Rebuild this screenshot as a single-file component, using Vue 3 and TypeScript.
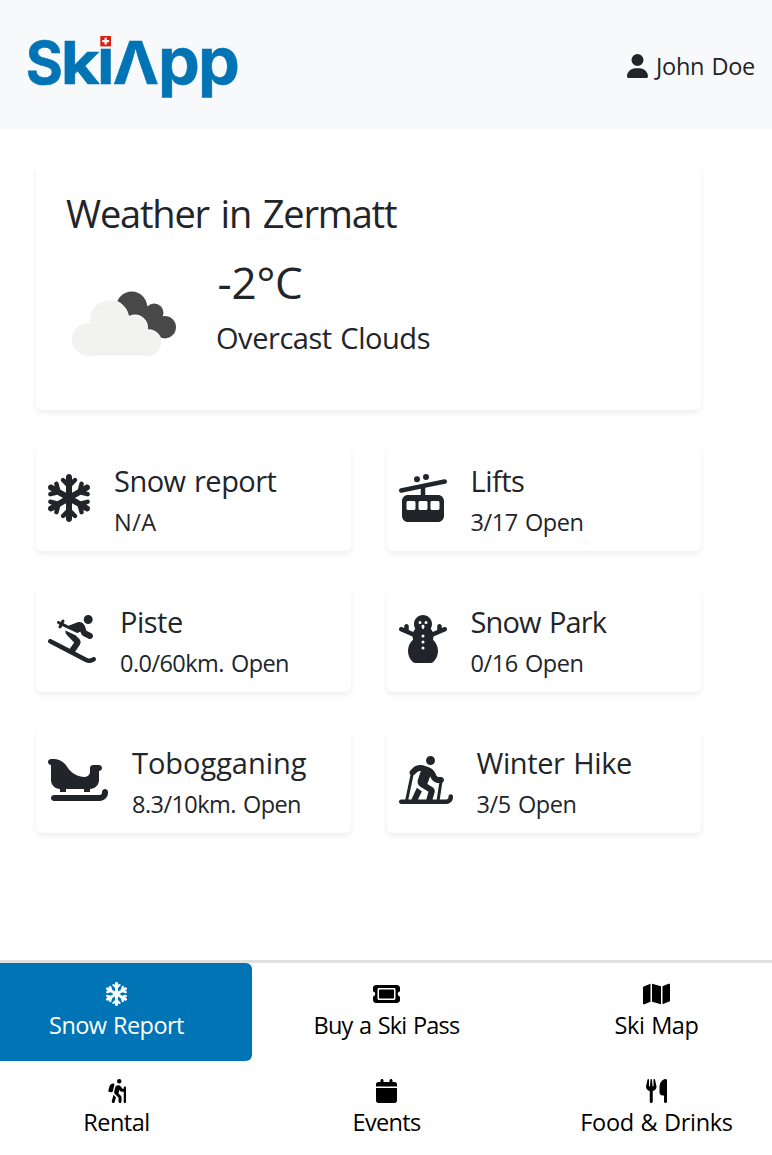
<script setup lang="ts">
interface Icon {
  width: number
  path: string
}

interface Tile {
  title: string
  status: string
  icon: Icon
  titleTracking: number
  statusTracking: number
}

interface NavItem {
  label: string
  icon: Icon
  tracking: number
  active?: boolean
}

const snowflake: Icon = {
  width: 448,
  path: 'M224 0c17.7 0 32 14.3 32 32V62.1l15-15c9.4-9.4 24.6-9.4 33.9 0s9.4 24.6 0 33.9l-49 49v70.3l61.4-35.8 17.7-66.1c3.4-12.8 16.6-20.4 29.4-17s20.4 16.6 17 29.4l-5.2 19.3 23.6-13.8c15.3-8.9 34.9-3.7 43.8 11.5s3.8 34.9-11.5 43.8l-25.3 14.8 21.7 5.8c12.8 3.4 20.4 16.6 17 29.4s-16.6 20.4-29.4 17l-67.7-18.1L287.5 256l60.9 35.5 67.7-18.1c12.8-3.4 26 4.2 29.4 17s-4.2 26-17 29.4l-21.7 5.8 25.3 14.8c15.3 8.9 20.4 28.5 11.5 43.8s-28.5 20.4-43.8 11.5l-23.6-13.8 5.2 19.3c3.4 12.8-4.2 26-17 29.4s-26-4.2-29.4-17l-17.7-66.1L256 311.7v70.3l49 49c9.4 9.4 9.4 24.6 0 33.9s-24.6 9.4-33.9 0l-15-15V480c0 17.7-14.3 32-32 32s-32-14.3-32-32V449.9l-15 15c-9.4 9.4-24.6 9.4-33.9 0s-9.4-24.6 0-33.9l49-49V311.7l-61.4 35.8-17.7 66.1c-3.4 12.8-16.6 20.4-29.4 17s-20.4-16.6-17-29.4l5.2-19.3L48.1 395.6c-15.3 8.9-34.9 3.7-43.8-11.5s-3.7-34.9 11.5-43.8l25.3-14.8-21.7-5.8c-12.8-3.4-20.4-16.6-17-29.4s16.6-20.4 29.4-17l67.7 18.1L160.5 256 99.6 220.5 31.9 238.6c-12.8 3.4-26-4.2-29.4-17s4.2-26 17-29.4l21.7-5.8L15.9 171.6C.6 162.7-4.5 143.1 4.4 127.9s28.5-20.4 43.8-11.5l23.6 13.8-5.2-19.3c-3.4-12.8 4.2-26 17-29.4s26 4.2 29.4 17l17.7 66.1L192 200.3V129.9L143 81c-9.4-9.4-9.4-24.6 0-33.9s24.6-9.4 33.9 0l15 15V32c0-17.7 14.3-32 32-32z',
}

const cableCar: Icon = {
  width: 512,
  path: 'M288 0a32 32 0 1 1 0 64 32 32 0 1 1 0-64zM160 56a32 32 0 1 1 64 0 32 32 0 1 1 -64 0zM32 288c0-35.3 28.7-64 64-64H232V157.5l-203.1 42c-13 2.7-25.7-5.7-28.4-18.6s5.7-25.7 18.6-28.4l232-48 232-48c13-2.7 25.7 5.7 28.4 18.6s-5.7 25.7-18.6 28.4L280 147.5V224H416c35.3 0 64 28.7 64 64V448c0 35.3-28.7 64-64 64H96c-35.3 0-64-28.7-64-64V288zm64 0c-8.8 0-16 7.2-16 16v64c0 8.8 7.2 16 16 16h64c8.8 0 16-7.2 16-16V304c0-8.8-7.2-16-16-16H96zm112 16v64c0 8.8 7.2 16 16 16h64c8.8 0 16-7.2 16-16V304c0-8.8-7.2-16-16-16H224c-8.8 0-16 7.2-16 16zm144-16c-8.8 0-16 7.2-16 16v64c0 8.8 7.2 16 16 16h64c8.8 0 16-7.2 16-16V304c0-8.8-7.2-16-16-16H352z',
}

const skier: Icon = {
  width: 512,
  path: 'M380.7 48a48 48 0 1 1 96 0 48 48 0 1 1 -96 0zM2.7 268.9c6.1-11.8 20.6-16.3 32.4-10.2L232.7 361.3l46.2-69.2-75.1-75.1c-14.6-14.6-20.4-33.9-18.4-52.1l108.8 52 39.3 39.3c16.2 16.2 18.7 41.5 6 60.6L289.8 391l128.7 66.8c13.6 7.1 29.8 7.2 43.6 .3l15.2-7.6c11.9-5.9 26.3-1.1 32.2 10.7s1.1 26.3-10.7 32.2l-15.2 7.6c-27.5 13.7-59.9 13.5-87.2-.7L12.9 301.3C1.2 295.2-3.4 280.7 2.7 268.9zM118.9 65.6L137 74.2l8.7-17.4c4-7.9 13.6-11.1 21.5-7.2s11.1 13.6 7.2 21.5l-8.5 16.9 54.7 26.2c1.5-.7 3.1-1.4 4.7-2.1l83.4-33.4c34.2-13.7 72.8 4.2 84.5 39.2l17.1 51.2 52.1 26.1c15.8 7.9 22.2 27.1 14.3 42.9s-27.1 22.2-42.9 14.3l-58.1-29c-11.4-5.7-20-15.7-24.1-27.8l-5.8-17.3-27.3 12.1-6.8 3-6.7-3.2L151.5 116.7l-9.2 18.4c-4 7.9-13.6 11.1-21.5 7.2s-11.1-13.6-7.2-21.5l9-18-17.6-8.4c-8-3.8-11.3-13.4-7.5-21.3s13.4-11.3 21.3-7.5z',
}

const snowman: Icon = {
  width: 512,
  path: 'M341.1 140.6c-2 3.9-1.6 8.6 1.2 12c7 8.5 12.9 18.1 17.2 28.4L408 160.2V120c0-13.3 10.7-24 24-24s24 10.7 24 24v19.6l22.5-9.7c12.2-5.2 26.3 .4 31.5 12.6s-.4 26.3-12.6 31.5l-56 24-73.6 31.5c-.5 9.5-2.1 18.6-4.8 27.3c-1.2 3.8-.1 8 2.8 10.8C396.7 296.9 416 338.2 416 384c0 44.7-18.3 85-47.8 114.1c-9.9 9.7-23.7 13.9-37.5 13.9H181.3c-13.9 0-27.7-4.2-37.5-13.9C114.3 469 96 428.7 96 384c0-45.8 19.3-87.1 50.1-116.3c2.9-2.8 4-6.9 2.8-10.8c-2.7-8.7-4.3-17.9-4.8-27.3L70.5 198.1l-56-24C2.4 168.8-3.3 154.7 1.9 142.5s19.3-17.8 31.5-12.6L56 139.6V120c0-13.3 10.7-24 24-24s24 10.7 24 24v40.2L152.6 181c4.3-10.3 10.1-19.9 17.2-28.4c2.8-3.4 3.3-8.1 1.2-12C164 127.2 160 112.1 160 96c0-53 43-96 96-96s96 43 96 96c0 16.1-4 31.2-10.9 44.6zM224 96a16 16 0 1 0 0-32 16 16 0 1 0 0 32zm48 128a16 16 0 1 0 -32 0 16 16 0 1 0 32 0zm-16 80a16 16 0 1 0 0-32 16 16 0 1 0 0 32zm16 48a16 16 0 1 0 -32 0 16 16 0 1 0 32 0zM288 96a16 16 0 1 0 0-32 16 16 0 1 0 0 32zm-48 24v3.2c0 3.2 .8 6.3 2.3 9l9 16.9c.9 1.7 2.7 2.8 4.7 2.8s3.8-1.1 4.7-2.8l9-16.9c1.5-2.8 2.3-5.9 2.3-9V120c0-8.8-7.2-16-16-16s-16 7.2-16 16z',
}

const sleigh: Icon = {
  width: 640,
  path: 'M32 32C14.3 32 0 46.3 0 64S14.3 96 32 96V256c0 53 43 96 96 96v32h64V352H384v32h64V352c53 0 96-43 96-96V160c17.7 0 32-14.3 32-32s-14.3-32-32-32H480c-17.7 0-32 14.3-32 32v41.3c0 30.2-24.5 54.7-54.7 54.7c-75.5 0-145.6-38.9-185.6-102.9l-4.3-6.9C174.2 67.6 125 37.6 70.7 32.7c-2.2-.5-4.4-.7-6.7-.7H55 32zM640 384c0-17.7-14.3-32-32-32s-32 14.3-32 32v8c0 13.3-10.7 24-24 24H64c-17.7 0-32 14.3-32 32s14.3 32 32 32H552c48.6 0 88-39.4 88-88v-8z',
}

const nordicSkier: Icon = {
  width: 576,
  path: 'M336 96a48 48 0 1 0 0-96 48 48 0 1 0 0 96zM227.2 160c1.9 0 3.8 .1 5.6 .3L201.6 254c-9.3 28 1.7 58.8 26.8 74.5l86.2 53.9L291.3 464H202.8l41.1-88.1-32.4-20.3c-7.8-4.9-14.7-10.7-20.6-17.3L132.2 464H99.7l54.2-257.6c4.6-1.5 9-4.1 12.7-7.8l23.1-23.1c9.9-9.9 23.4-15.5 37.5-15.5zM121.4 198.6c.4 .4 .8 .8 1.3 1.2L67 464H24c-13.3 0-24 10.7-24 24s10.7 24 24 24H504c39.8 0 72-32.2 72-72v-8c0-13.3-10.7-24-24-24s-24 10.7-24 24v8c0 13.3-10.7 24-24 24H434.4l27.6-179.3c10.5-5.2 17.8-16.1 17.8-28.7c0-17.7-14.3-32-32-32H426.7c-12.9 0-24.6-7.8-29.5-19.7l-6.3-15c-14.6-35.1-44.1-61.9-80.5-73.1l-48.7-15c-11.1-3.4-22.7-5.2-34.4-5.2c-31 0-60.8 12.3-82.7 34.3l-23.1 23.1c-12.5 12.5-12.5 32.8 0 45.3zm308 89.4L402.3 464H357.8l21.6-75.6c5.9-20.6-2.6-42.6-20.7-53.9L302 299l30.9-82.4 5.1 12.3C353 264.7 387.9 288 426.7 288h2.7z',
}

const ticket: Icon = {
  width: 576,
  path: 'M64 64C28.7 64 0 92.7 0 128v64c0 8.8 7.4 15.7 15.7 18.6C34.5 217.1 48 235 48 256s-13.5 38.9-32.3 45.4C7.4 304.3 0 311.2 0 320v64c0 35.3 28.7 64 64 64H512c35.3 0 64-28.7 64-64V320c0-8.8-7.4-15.7-15.7-18.6C541.5 294.9 528 277 528 256s13.5-38.9 32.3-45.4c8.3-2.9 15.7-9.8 15.7-18.6V128c0-35.3-28.7-64-64-64H64zm64 112l0 160c0 8.8 7.2 16 16 16H432c8.8 0 16-7.2 16-16V176c0-8.8-7.2-16-16-16H144c-8.8 0-16 7.2-16 16zM96 160c0-17.7 14.3-32 32-32H448c17.7 0 32 14.3 32 32V352c0 17.7-14.3 32-32 32H128c-17.7 0-32-14.3-32-32V160z',
}

const map: Icon = {
  width: 576,
  path: 'M384 476.1L192 421.2V35.9L384 90.8V476.1zm32-1.2V88.4L543.1 37.5c15.8-6.3 32.9 5.3 32.9 22.3V394.6c0 9.8-6 18.6-15.1 22.3L416 474.8zM15.1 95.1L160 37.2V423.6L32.9 474.5C17.1 480.8 0 469.2 0 452.2V117.4c0-9.8 6-18.6 15.1-22.3z',
}

const hiker: Icon = {
  width: 384,
  path: 'M192 48a48 48 0 1 1 96 0 48 48 0 1 1 -96 0zm51.3 182.7L224.2 307l49.7 49.7c9 9 14.1 21.2 14.1 33.9V480c0 17.7-14.3 32-32 32s-32-14.3-32-32V397.3l-73.9-73.9c-15.8-15.8-22.2-38.6-16.9-60.3l20.4-84c8.3-34.1 42.7-54.9 76.7-46.4c19 4.8 35.6 16.4 46.4 32.7L305.1 208H336V184c0-13.3 10.7-24 24-24s24 10.7 24 24v55.8c0 .1 0 .2 0 .2s0 .2 0 .2V488c0 13.3-10.7 24-24 24s-24-10.7-24-24V272H296.6c-16 0-31-8-39.9-21.4l-13.3-20zM81.1 471.9L117.3 334c3 4.2 6.4 8.2 10.1 11.9l41.9 41.9L142.9 488.1c-4.5 17.1-22 27.3-39.1 22.8s-27.3-22-22.8-39.1zm55.5-346L101.4 266.5c-3 12.1-14.9 19.9-27.2 17.9l-47.9-8c-14-2.3-22.9-16.3-19.2-30L31.9 155c9.5-34.8 41.1-59 77.2-59h4.2c15.6 0 27.1 14.7 23.3 29.8z',
}

const calendar: Icon = {
  width: 448,
  path: 'M96 32V64H48C21.5 64 0 85.5 0 112v48H448V112c0-26.5-21.5-48-48-48H352V32c0-17.7-14.3-32-32-32s-32 14.3-32 32V64H160V32c0-17.7-14.3-32-32-32S96 14.3 96 32zM448 192H0V464c0 26.5 21.5 48 48 48H400c26.5 0 48-21.5 48-48V192z',
}

const utensils: Icon = {
  width: 448,
  path: 'M416 0C400 0 288 32 288 176V288c0 35.3 28.7 64 64 64h32V480c0 17.7 14.3 32 32 32s32-14.3 32-32V352 240 32c0-17.7-14.3-32-32-32zM64 16C64 7.8 57.9 1 49.7 .1S34.2 4.6 32.4 12.5L2.1 148.8C.7 155.1 0 161.5 0 167.9c0 45.9 35.1 83.6 80 87.7V480c0 17.7 14.3 32 32 32s32-14.3 32-32V255.6c44.9-4.1 80-41.8 80-87.7c0-6.4-.7-12.8-2.1-19.1L191.6 12.5c-1.8-8-9.3-13.3-17.4-12.4S160 7.8 160 16V150.2c0 5.4-4.4 9.8-9.8 9.8c-5.1 0-9.3-3.9-9.8-9L127.9 14.6C127.2 6.3 120.3 0 112 0s-15.2 6.3-15.9 14.6L83.7 151c-.5 5.1-4.7 9-9.8 9c-5.4 0-9.8-4.4-9.8-9.8V16z',
}

const tiles: Tile[] = [
  { title: 'Snow report', status: 'N/A', icon: snowflake, titleTracking: -0.52, statusTracking: 0.5 },
  { title: 'Lifts', status: '3/17 Open', icon: cableCar, titleTracking: -0.5, statusTracking: -0.42 },
  { title: 'Piste', status: '0.0/60km. Open', icon: skier, titleTracking: -0.5, statusTracking: -0.55 },
  { title: 'Snow Park', status: '0/16 Open', icon: snowman, titleTracking: -0.85, statusTracking: -0.42 },
  { title: 'Tobogganing', status: '8.3/10km. Open', icon: sleigh, titleTracking: -0.04, statusTracking: -0.55 },
  { title: 'Winter Hike', status: '3/5 Open', icon: nordicSkier, titleTracking: -0.38, statusTracking: -0.42 },
]

const navItems: NavItem[] = [
  { label: 'Snow Report', icon: snowflake, tracking: -0.56, active: true },
  { label: 'Buy a Ski Pass', icon: ticket, tracking: -0.75 },
  { label: 'Ski Map', icon: map, tracking: -0.4 },
  { label: 'Rental', icon: hiker, tracking: -0.51 },
  { label: 'Events', icon: calendar, tracking: -0.66 },
  { label: 'Food & Drinks', icon: utensils, tracking: -0.33 },
]
</script>

<template>
  <div class="app">
    <header class="header">
      <svg class="logo" width="214" height="66" viewBox="26 34 214 66" role="img" aria-label="SkiApp">
        <g class="wordmark">
          <text class="cap" transform="translate(25.7 83.5) scale(.96 1)">S</text>
          <text class="cap" transform="translate(60.7 83.5) scale(1.14 1)">k</text>
          <text class="low" transform="translate(97 83.7)">ı</text>
          <text class="cap" transform="translate(112.8 83.5) scale(1.05 1)">Λ</text>
          <text class="low" transform="translate(158 83.7) scale(1.03 1)">p</text>
          <text class="low" transform="translate(198 83.7) scale(1.03 1)">p</text>
        </g>
        <rect x="100.3" y="36" width="10.7" height="10.4" fill="#dc2010" />
        <path d="M105.65 37.8v6.8M102.25 41.2h6.8" stroke="#fff" stroke-width="2.2" />
      </svg>
      <div class="user">
        <svg width="21" height="24" viewBox="0 0 448 512" fill="currentColor">
          <path d="M224 256A128 128 0 1 0 224 0a128 128 0 1 0 0 256zm-45.7 48C79.8 304 0 383.8 0 482.3C0 498.7 13.3 512 29.7 512H418.3c16.4 0 29.7-13.3 29.7-29.7C448 383.8 368.2 304 269.7 304H178.3z" />
        </svg>
        <span class="user-name">John Doe</span>
      </div>
    </header>

    <main class="content">
      <section class="card weather">
        <h2 class="weather-title">Weather in Zermatt</h2>
        <div class="weather-body">
          <svg class="weather-icon" width="120" height="120" viewBox="0 0 120 120">
            <g fill="#484849">
              <circle cx="65.7" cy="42.9" r="15.4" />
              <circle cx="88.2" cy="48.8" r="9.3" />
              <circle cx="98.8" cy="63.2" r="11.2" />
              <path d="M58 50L79 40L98 54L98 74L78 68z" />
            </g>
            <g fill="#f2f2f1" stroke="#fff" stroke-width="2" paint-order="stroke">
              <circle cx="43.3" cy="55.6" r="19" />
              <circle cx="69" cy="63.6" r="12" />
              <circle cx="82.3" cy="79" r="12.7" />
            </g>
            <g fill="#f2f2f1">
              <circle cx="22.3" cy="75.4" r="16.3" />
              <circle cx="43.3" cy="55.6" r="19" />
              <circle cx="69" cy="63.6" r="12" />
              <path d="M22 70L40 60H74L84 74V91.7H22z" />
            </g>
          </svg>
          <div class="weather-text">
            <div class="temperature">-2°C</div>
            <div class="condition">Overcast Clouds</div>
          </div>
        </div>
      </section>

      <section class="tiles">
        <article v-for="tile in tiles" :key="tile.title" class="card tile">
          <svg class="tile-icon" :width="(tile.icon.width * 48) / 512" height="48" :viewBox="`0 0 ${tile.icon.width} 512`" fill="currentColor">
            <path :d="tile.icon.path" />
          </svg>
          <div>
            <h3 class="tile-title" :style="{ letterSpacing: tile.titleTracking + 'px' }">{{ tile.title }}</h3>
            <p class="tile-status" :style="{ letterSpacing: tile.statusTracking + 'px' }">{{ tile.status }}</p>
          </div>
        </article>
      </section>
    </main>

    <nav class="nav">
      <div class="nav-grid">
        <a v-for="item in navItems" :key="item.label" class="nav-item" :class="{ active: item.active }">
          <svg :width="(item.icon.width * 24) / 512" height="24" :viewBox="`0 0 ${item.icon.width} 512`" fill="currentColor">
            <path :d="item.icon.path" />
          </svg>
          <span class="nav-label" :style="{ letterSpacing: item.tracking + 'px' }">{{ item.label }}</span>
        </a>
      </div>
    </nav>
  </div>
</template>

<style>
body {
  margin: 0;
  background: #fff;
}
</style>

<style scoped>
.app {
  display: flex;
  flex-direction: column;
  height: 1155px;
  overflow: hidden;
  color: #212529;
  font-family: "Open Sans", "Noto Sans", sans-serif;
  white-space: nowrap;
}

.header {
  box-sizing: border-box;
  display: flex;
  justify-content: space-between;
  align-items: flex-start;
  height: 128.7px;
  padding: 34px 17px 0 26px;
  background: #f8f9fb;
}

.logo {
  display: block;
  overflow: visible;
}

.wordmark {
  fill: #0074b5;
  stroke: #0074b5;
  stroke-width: 0.5px;
  font-family: Inter, sans-serif;
  font-weight: 700;
}

.cap {
  font-size: 59px;
}

.low {
  font-size: 64.5px;
}

.user {
  display: flex;
  align-items: center;
  gap: 8px;
  margin-top: 14px;
  font-size: 23.5px;
  line-height: 36px;
}

.user-name {
  letter-spacing: -0.29px;
  word-spacing: 1.5px;
}

.content {
  flex: 1;
  padding: 36px 71px 0 36px;
}

.card {
  box-sizing: border-box;
  border-radius: 6px;
  background: #fff;
  box-shadow: 0 3px 6px rgba(0, 0, 0, 0.07);
}

.weather {
  height: 245.3px;
  padding: 24.6px 30px 0;
}

.weather-title {
  margin: 0;
  font-size: 38px;
  font-weight: 400;
  line-height: 48px;
  letter-spacing: -1.2px;
  word-spacing: 3px;
}

.weather-body {
  display: flex;
  gap: 30px;
  padding-top: 17px;
}

.weather-icon {
  margin-top: 9.7px;
}

.temperature {
  padding: 1px 0 0 1.5px;
  font-size: 44px;
  line-height: 54px;
  letter-spacing: -0.2px;
}

.condition {
  margin-top: 11px;
  font-size: 29px;
  line-height: 36px;
  letter-spacing: -0.45px;
  word-spacing: 1.5px;
}

.tiles {
  display: grid;
  grid-template-columns: 1fr 1fr;
  gap: 36px;
  margin-top: 36px;
}

.tile {
  display: flex;
  align-items: flex-start;
  gap: 24px;
  height: 105px;
  padding: 17px 12px 0;
}

.tile-icon {
  margin-top: 11px;
}

.tile-title,
.tile-status {
  margin: 0;
  font-weight: 400;
  line-height: 36px;
  word-spacing: 1.5px;
}

.tile-title {
  font-size: 29px;
}

.tile-status {
  margin-top: 5px;
  font-size: 23.5px;
}

.nav {
  height: 192px;
  border-top: 3px solid #e0e0e0;
  color: #000;
}

.nav-grid {
  display: grid;
  grid-template-columns: repeat(3, 270px);
  grid-auto-rows: 97px;
  margin-left: -18.5px;
}

.nav-item {
  display: flex;
  flex-direction: column;
  align-items: center;
  box-sizing: border-box;
  height: 98px;
  padding-top: 19px;
  border-radius: 6px;
}

.nav-item.active {
  background: #0074b5;
  color: #fff;
}

.nav-label {
  margin-top: 1px;
  font-size: 23.5px;
  line-height: 36px;
  word-spacing: 1px;
}
</style>
